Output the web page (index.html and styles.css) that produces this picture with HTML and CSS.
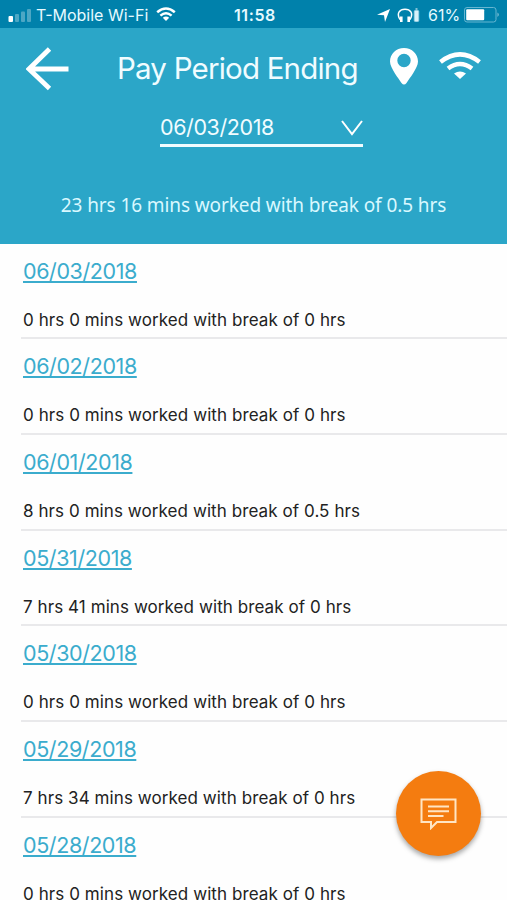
FILE: index.html
```html
<!DOCTYPE html>
<html lang="en">
<head>
<meta charset="utf-8">
<title>Pay Period Ending</title>
<link rel="stylesheet" href="styles.css">
</head>
<body>
<div class="status">
  <svg class="signal" width="24" height="14" viewBox="0 0 24 14" fill="#fff"><rect x="0.5" y="8" width="4.5" height="6" rx="1"/><g opacity=".3"><rect x="7" y="6" width="4" height="8" rx="1"/><rect x="13" y="3.500" width="4" height="10.500" rx="1"/><rect x="19" y="1" width="4" height="13" rx="1"/></g></svg>
  <span class="carrier">T-Mobile Wi-Fi</span>
  <svg class="wifi-small" width="20" height="15" viewBox="0 0 20 15" fill="none" stroke="#fff" stroke-width="2.500"><path d="M1.200 5.300Q10-2.300 18.800 5.300M4.400 8.600Q10 3.800 15.600 8.600"/><path d="M6.800 10.800Q10 8.200 13.200 10.800L10 14Z" fill="#fff" stroke="none"/></svg>
  <span class="time">11:58</span>
  <svg class="locate" width="13" height="13" viewBox="0 0 13 13" fill="#fff"><path d="M13 0L8 13L7 6.300L0 5.800Z"/></svg>
  <svg class="phones" width="24" height="15" viewBox="0 0 24 15" fill="none" stroke="#fff" stroke-width="1.500"><path d="M3 11.500C-1 5 3 1.200 8 1.200S17 5 13 11.500"/><path d="M4.300 8.500V14M11.700 8.500V14" stroke-width="2.600"/><rect x="17.300" y="2.500" width="4.400" height="11" rx="1" fill="#d8f1f9" stroke="#9bd2e5" stroke-width="1"/><path d="M18.500 1H20.500" stroke-width="1"/></svg>
  <span class="percent">61%</span>
  <svg class="battery" width="36" height="16" viewBox="0 0 36 16"><rect x=".5" y=".5" width="31.500" height="14.500" rx="2.500" fill="none" stroke="#66b6d1"/><rect x="2.200" y="2.300" width="18" height="11" rx="1" fill="#fff"/><path d="M33.500 5.500Q36 7.700 33.500 10Z" fill="#8cc6da"/></svg>
</div>
<header class="header">
  <div class="bar">
    <svg class="back" width="43" height="44" viewBox="0 0 43 44" fill="none" stroke="#fff" stroke-width="4.800"><path d="M23.500 2L3 22L23.500 41.500M3 22H42.500"/></svg>
    <h1 class="title">Pay Period Ending</h1>
    <svg class="pin" width="28" height="37" viewBox="0 0 28 37" fill="#fff" fill-rule="evenodd"><path d="M14 0C6 0 0 6 0 13.500C0 20 9 31 11.500 35Q14 38 16.500 35C19 31 28 20 28 13.500C28 6 22 0 14 0ZM14 5.800A6.700 6.700 0 1 1 14 19.200A6.700 6.700 0 0 1 14 5.800Z"/></svg>
    <svg class="wifi" width="42" height="27" viewBox="0 0 42 27" fill="none" stroke="#fff" stroke-width="4.500"><path d="M1.500 10Q21-5.200 40.500 10M9 16.500Q21 7.500 33 16.500"/><path d="M15 21.500Q21 17.500 27 21.500L21 27Z" fill="#fff" stroke="none"/></svg>
  </div>
  <div class="select"><span class="period">06/03/2018</span><svg width="22" height="16" viewBox="0 0 22 16" fill="none" stroke="#fff" stroke-width="2"><path d="M1 1L11 14L21 1"/></svg></div>
  <p class="summary"><span>23 hrs 16 mins worked with break of 0.5 hrs</span></p>
</header>
<main class="list">
  <section class="row"><a class="date">06/03/2018</a><p class="hours">0 hrs 0 mins worked with break of 0 hrs</p></section>
  <section class="row"><a class="date">06/02/2018</a><p class="hours">0 hrs 0 mins worked with break of 0 hrs</p></section>
  <section class="row"><a class="date">06/01/2018</a><p class="hours">8 hrs 0 mins worked with break of 0.5 hrs</p></section>
  <section class="row"><a class="date">05/31/2018</a><p class="hours">7 hrs 41 mins worked with break of 0 hrs</p></section>
  <section class="row"><a class="date">05/30/2018</a><p class="hours">0 hrs 0 mins worked with break of 0 hrs</p></section>
  <section class="row"><a class="date">05/29/2018</a><p class="hours">7 hrs 34 mins worked with break of 0 hrs</p></section>
  <section class="row"><a class="date">05/28/2018</a><p class="hours">0 hrs 0 mins worked with break of 0 hrs</p></section>
</main>
<div class="chat"><svg width="37" height="32" viewBox="0 0 37 32" fill="none" stroke="#ffe5c4" stroke-width="2"><path d="M1.500 1.500H35.500V24H17L11 30V24H1.500Z"/><path d="M8 8.500H29M8 13.200H29M8 18H23.500"/></svg></div>
</body>
</html>
```

FILE: styles.css
```css
* { box-sizing: border-box; }
body {
  margin: 0;
  width: 507px;
  height: 900px;
  overflow: hidden;
  position: relative;
  background: #fefefe;
  font-family: Inter, "Liberation Sans", sans-serif;
}
svg { display: block; flex: none; }
h1, p { margin: 0; font-weight: 400; }
.status {
  height: 28px;
  padding: 2px 0 0 8px;
  background: #0081ab;
  color: #e6faff;
  display: flex;
  align-items: center;
  font-size: 16px;
  white-space: nowrap;
}
.signal { margin: 0 4px 0 0; }
.carrier { width: 120px; letter-spacing: 0; }
.time { width: 143px; margin-left: 58px; font-weight: 600; letter-spacing: 0.6px; }
.wifi-small { margin-top: -2px; }
.phones { margin-left: 7px; }
.percent { width: 32px; margin: 0 4px 0 7px; }
.header {
  height: 215.5px;
  padding-top: 19px;
  background: #2ba6c8;
  color: #f0fcff;
}
.bar { height: 44px; display: flex; align-items: flex-start; padding-left: 26px; }
.title {
  width: 241px;
  margin-left: 48px;
  font-size: 29.5px;
  line-height: 42px;
  letter-spacing: -0.8px;
  white-space: nowrap;
}
.pin { margin: 1px 0 0 32px; }
.wifi { margin: 5px 0 0 21px; }
.select {
  width: 203px;
  height: 35px;
  margin: 21px 0 0 160px;
  border-bottom: 3px solid #f0fcff;
  display: flex;
  justify-content: space-between;
  font-size: 21.5px;
  letter-spacing: -0.4px;
  line-height: 30px;
}
.select svg { margin-top: 8px; }
.summary {
  margin-top: 43px;
  text-align: center;
  font-family: "Noto Sans", sans-serif;
  font-size: 19px;
  letter-spacing: -0.1px;
  line-height: 30px;
  color: #d9f8ff;
}
.list { padding-left: 21px; }
.row {
  height: 95.7px;
  padding: 12px 0 0 2px;
  border-bottom: 2px solid #e9e9eb;
}
.date {
  display: block;
  width: max-content;
  height: 31px;
  font-size: 21.5px;
  letter-spacing: -0.4px;
  line-height: 30px;
  color: #3baccd;
  text-decoration: underline;
  text-decoration-thickness: 1.5px;
  text-underline-offset: 2px;
  text-decoration-skip-ink: none;
}
.hours {
  margin-top: 23px;
  font-size: 17px;
  letter-spacing: 0.08px;
  line-height: 20px;
  color: #222;
}
.chat {
  position: absolute;
  left: 396px;
  top: 771px;
  width: 85px;
  height: 85px;
  border-radius: 50%;
  background: #f47c10;
  box-shadow: 0 3px 5px rgba(0, 0, 0, .35);
  display: flex;
  align-items: center;
  justify-content: center;
}
```
